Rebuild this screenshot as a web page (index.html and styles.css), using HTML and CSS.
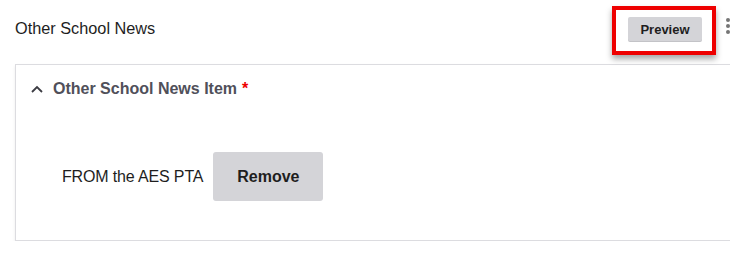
FILE: index.html
```html
<!DOCTYPE html>
<html lang="en">
<head>
  <meta charset="UTF-8"/>
  <meta name="viewport" content="width=device-width, initial-scale=1.0"/>
  <title>Other School News</title>
  <link rel="stylesheet" href="styles.css">
</head>
<body>
  <div class="field">
    <div class="field-head">
      <h3 class="field-label">Other School News</h3>
      <div class="field-actions">
        <div class="highlight">
          <button class="btn-preview">Preview</button>
        </div>
        <span class="kebab"><i></i><i></i><i></i></span>
      </div>
    </div>
    <div class="card">
      <div class="card-head">
        <svg class="chevron" width="14" height="14" viewBox="0 0 14 14"><path d="M2 10 L7 5 L12 10" fill="none" stroke="#3c3c43" stroke-width="1.8"/></svg>
        <span class="card-title">Other School News Item</span>
        <span class="req">*</span>
      </div>
      <div class="card-body">
        <span class="item-name">FROM the AES PTA</span>
        <button class="btn-remove">Remove</button>
      </div>
    </div>
  </div>
</body>
</html>
```

FILE: styles.css
```css
* { box-sizing: border-box; margin:0; padding:0; }
body { font-family: "Liberation Sans", Arial, sans-serif; background:#fff; color:#1e1e1e; overflow:hidden; }
.field { width:760px; padding-left:15px; }
.field-head { display:flex; align-items:center; justify-content:space-between; height:64px; padding-right:30px; }
.field-label { font-size:16.3px; font-weight:normal; color:#1e1e1e; margin-top:-7px; }
.field-actions { display:flex; align-items:center; gap:10px; margin-top:-4px; }
.highlight { border:4px solid #ee0000; padding:7px 10px 9px 12px; box-shadow:0 4px 6px rgba(0,0,0,0.35); }
.btn-preview { background:#d4d4d8; border:none; border-radius:2px; font:bold 13px "Liberation Sans", Arial, sans-serif; color:#1e1e1e; width:74px; height:25px; box-shadow:0 -1px 0 rgba(0,0,0,0.08) inset; }
.kebab { display:flex; flex-direction:column; gap:2px; margin-top:-8px; }
.kebab i { display:block; width:4px; height:4px; border-radius:50%; background:#757575; }
.card { border:1px solid #dcdce0; border-right:none; height:177px; box-shadow:0 2px 3px rgba(0,0,0,0.08); }
.card-head { display:flex; align-items:center; height:48px; padding-left:14px; }
.chevron { margin-right:9px; }
.card-title { font-weight:bold; font-size:16px; color:#50505a; }
.req { color:#e00; font-weight:bold; font-size:16px; margin-left:5px; }
.card-body { display:flex; align-items:center; gap:10px; padding-left:46px; margin-top:39px; }
.item-name { font-size:16px; color:#1e1e1e; letter-spacing:-0.15px; }
.btn-remove { background:#d4d4d8; border:none; border-radius:3px; font:bold 16px "Liberation Sans", Arial, sans-serif; color:#1e1e1e; width:110px; height:49px; }
```
